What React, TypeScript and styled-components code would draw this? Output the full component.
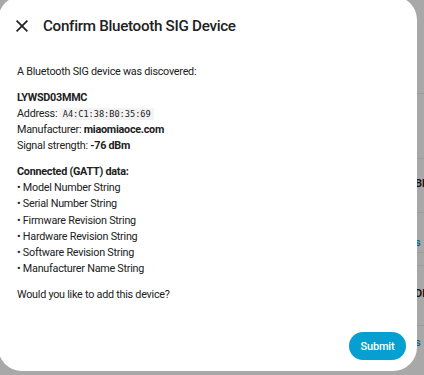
import styled, { createGlobalStyle } from "styled-components";

const GlobalStyle = createGlobalStyle`
  html, body {
    margin: 0;
    padding: 0;
    width: 424px;
    height: 375px;
    overflow: hidden;
    font-family: Roboto, "Liberation Sans", sans-serif;
  }
`;

const Backdrop = styled.div`
  position: relative;
  width: 424px;
  height: 375px;
  overflow: hidden;
  background: #a8a8a8;
`;

const BackList = styled.div`
  display: flex;
  flex-direction: column;
  padding-top: 93px;
`;

const BackRow = styled.div<{ $h: number; $pad?: number; $blue?: boolean }>`
  height: ${(p) => p.$h}px;
  box-sizing: border-box;
  border-top: 1px solid #9c9c9c;
  padding-top: ${(p) => p.$pad ?? 0}px;
  padding-left: 415px;
  font-size: 11px;
  line-height: 16px;
  font-weight: ${(p) => (p.$blue ? 500 : 700)};
  color: ${(p) => (p.$blue ? "#05628c" : "#151515")};
  white-space: nowrap;
`;

const Dialog = styled.div`
  position: absolute;
  left: -2px;
  top: -4px;
  width: 419px;
  height: 375px;
  box-sizing: border-box;
  background: #ffffff;
  border-radius: 24px;
  display: flex;
  flex-direction: column;
  padding: 0 11px 11px 19px;
  color: #212121;
`;

const Header = styled.div`
  display: flex;
  align-items: center;
  height: 56px;
  padding-top: 4px;
  box-sizing: border-box;
  margin-left: -5px;
  gap: 11px;
`;

const CloseButton = styled.button`
  width: 20px;
  height: 20px;
  padding: 0;
  border: none;
  background: none;
  display: flex;
  align-items: center;
  justify-content: center;
  color: #212121;
`;

const Title = styled.h2`
  margin: 0;
  font-size: 15.2px;
  font-weight: 500;
  letter-spacing: -0.3px;
  color: #212121;
`;

const Body = styled.div`
  flex: 1;
  padding-top: 12px;
  font-size: 10.8px;
  letter-spacing: -0.25px;
  line-height: 16.2px;
`;

const Para = styled.p`
  margin: 0 0 9.5px;
`;

const Line = styled.div``;

const Strong = styled.b`
  font-weight: 700;
`;

const Code = styled.code`
  font-family: "DejaVu Sans Mono", "Liberation Mono", monospace;
  font-size: 8.6px;
  letter-spacing: 0;
  background: #f3f3f3;
  padding: 1px 3px;
  border-radius: 2px;
`;

const Footer = styled.div`
  display: flex;
  justify-content: flex-end;
`;

const SubmitButton = styled.button`
  width: 57px;
  height: 28px;
  border: none;
  border-radius: 14px;
  background: #079fd0;
  color: #ffffff;
  font-family: Roboto, "Liberation Sans", sans-serif;
  font-size: 11px;
  letter-spacing: -0.2px;
  font-weight: 500;
  padding: 0;
`;

const gattItems = [
  "Model Number String",
  "Serial Number String",
  "Firmware Revision String",
  "Hardware Revision String",
  "Software Revision String",
  "Manufacturer Name String",
];

export default function App() {
  return (
    <>
      <GlobalStyle />
      <Backdrop>
        <BackList>
          <BackRow $h={65} />
          <BackRow $h={54} $pad={17}>
            Bl
          </BackRow>
          <BackRow $h={40} $pad={22} $blue>
            s
          </BackRow>
          <BackRow $h={13} />
          <BackRow $h={60} $pad={20}>
            DL
          </BackRow>
          <BackRow $h={40} $pad={9} $blue>
            s
          </BackRow>
        </BackList>
        <Dialog>
          <Header>
            <CloseButton>
              <svg width="12" height="12" viewBox="0 0 14 14">
                <path
                  d="M14 1.41L12.59 0 7 5.59 1.41 0 0 1.41 5.59 7 0 12.59 1.41 14 7 8.41 12.59 14 14 12.59 8.41 7z"
                  fill="currentColor"
                />
              </svg>
            </CloseButton>
            <Title>Confirm Bluetooth SIG Device</Title>
          </Header>
          <Body>
            <Para>A Bluetooth SIG device was discovered:</Para>
            <Para>
              <Line>
                <Strong>LYWSD03MMC</Strong>
              </Line>
              <Line>
                Address: <Code>A4:C1:38:B0:35:69</Code>
              </Line>
              <Line>
                Manufacturer: <Strong>miaomiaoce.com</Strong>
              </Line>
              <Line>
                Signal strength: <Strong>-76 dBm</Strong>
              </Line>
            </Para>
            <Para>
              <Line>
                <Strong>Connected (GATT) data:</Strong>
              </Line>
              {gattItems.map((item) => (
                <Line key={item}>• {item}</Line>
              ))}
            </Para>
            <Para>Would you like to add this device?</Para>
          </Body>
          <Footer>
            <SubmitButton>Submit</SubmitButton>
          </Footer>
        </Dialog>
      </Backdrop>
    </>
  );
}
